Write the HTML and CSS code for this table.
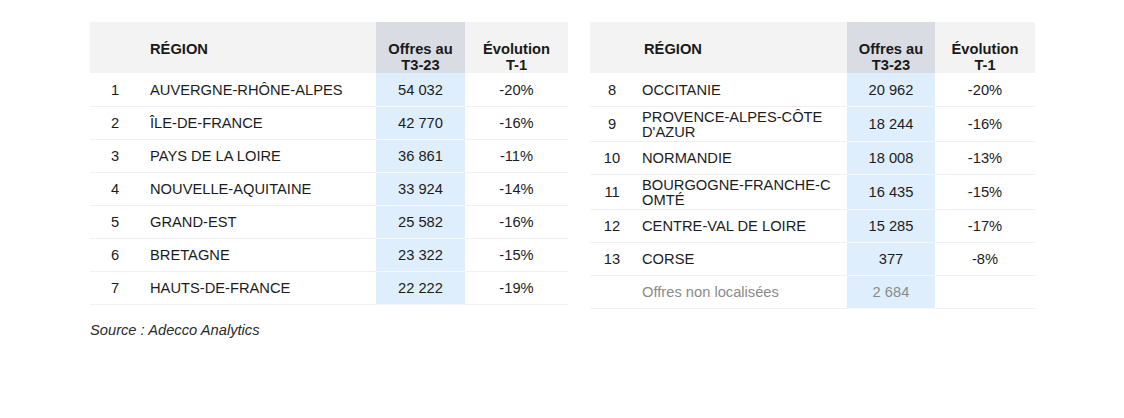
FILE: index.html
```html
<!DOCTYPE html>
<html lang="fr">
<head>
<meta charset="utf-8">
<title>Offres par région</title>
<link rel="stylesheet" href="styles.css">
</head>
<body>
<div class="page">
  <div class="block block-left">
    <table class="grid grid-left">
      <colgroup><col class="c-num"><col class="c-reg"><col class="c-off"><col class="c-evo"></colgroup>
      <thead>
        <tr><th></th><th class="th-reg">RÉGION</th><th class="th-off">Offres au<br>T3-23</th><th>Évolution<br>T-1</th></tr>
      </thead>
      <tbody>
        <tr><td class="num">1</td><td class="reg">AUVERGNE-RHÔNE-ALPES</td><td class="off">54 032</td><td class="evo">-20%</td></tr>
        <tr><td class="num">2</td><td class="reg">ÎLE-DE-FRANCE</td><td class="off">42 770</td><td class="evo">-16%</td></tr>
        <tr><td class="num">3</td><td class="reg">PAYS DE LA LOIRE</td><td class="off">36 861</td><td class="evo">-11%</td></tr>
        <tr><td class="num">4</td><td class="reg">NOUVELLE-AQUITAINE</td><td class="off">33 924</td><td class="evo">-14%</td></tr>
        <tr><td class="num">5</td><td class="reg">GRAND-EST</td><td class="off">25 582</td><td class="evo">-16%</td></tr>
        <tr><td class="num">6</td><td class="reg">BRETAGNE</td><td class="off">23 322</td><td class="evo">-15%</td></tr>
        <tr><td class="num">7</td><td class="reg">HAUTS-DE-FRANCE</td><td class="off">22 222</td><td class="evo">-19%</td></tr>
      </tbody>
    </table>
    <p class="source">Source : Adecco Analytics</p>
  </div>
  <div class="block block-right">
    <table class="grid grid-right">
      <colgroup><col class="c-num"><col class="c-reg"><col class="c-off"><col class="c-evo"></colgroup>
      <thead>
        <tr><th></th><th class="th-reg">RÉGION</th><th class="th-off">Offres au<br>T3-23</th><th>Évolution<br>T-1</th></tr>
      </thead>
      <tbody>
        <tr><td class="num">8</td><td class="reg">OCCITANIE</td><td class="off">20 962</td><td class="evo">-20%</td></tr>
        <tr><td class="num">9</td><td class="reg">PROVENCE-ALPES-CÔTE<br>D'AZUR</td><td class="off">18 244</td><td class="evo">-16%</td></tr>
        <tr><td class="num">10</td><td class="reg">NORMANDIE</td><td class="off">18 008</td><td class="evo">-13%</td></tr>
        <tr><td class="num">11</td><td class="reg">BOURGOGNE-FRANCHE-C<br>OMTÉ</td><td class="off">16 435</td><td class="evo">-15%</td></tr>
        <tr><td class="num">12</td><td class="reg">CENTRE-VAL DE LOIRE</td><td class="off">15 285</td><td class="evo">-17%</td></tr>
        <tr><td class="num">13</td><td class="reg">CORSE</td><td class="off">377</td><td class="evo">-8%</td></tr>
        <tr class="muted"><td class="num"></td><td class="reg">Offres non localisées</td><td class="off">2 684</td><td class="evo"></td></tr>
      </tbody>
    </table>
  </div>
</div>
</body>
</html>
```
FILE: styles.css
```css
* { box-sizing: border-box; }
html, body { margin: 0; padding: 0; background: #ffffff; }
body {
  font-family: "Liberation Sans", Arial, Helvetica, sans-serif;
  color: #1c1c1c;
  font-size: 14.7px;
}
.page {
  display: flex;
  align-items: flex-start;
  gap: 22px;
  padding: 22px 0 0 90px;
}
.grid {
  border-collapse: collapse;
  table-layout: fixed;
}
.grid-left { width: 478px; }
.grid-right { width: 445px; }
.grid-left .c-num { width: 50px; }
.grid-left .c-reg { width: 236px; }
.grid-left .c-off { width: 89px; }
.grid-left .c-evo { width: 103px; }
.grid-right .c-num { width: 44px; }
.grid-right .c-reg { width: 213px; }
.grid-right .c-off { width: 88px; }
.grid-right .c-evo { width: 100px; }

.grid th {
  background: #f3f3f3;
  font-weight: bold;
  font-size: 14.7px;
  line-height: 16px;
  text-align: center;
  vertical-align: baseline;
  padding: 19px 4px 0;
  color: #1a1a1a;
}
.grid th.th-reg { text-align: left; padding-left: 10px; }
.grid th.th-off { background: #d9dde3; }

.grid td {
  height: 33px;
  padding: 3px 4px 1px;
  line-height: 15px;
  vertical-align: middle;
  text-align: center;
  border-bottom: 1px solid #f0f0f0;
}
.grid td.reg { text-align: left; padding-left: 10px; }
.grid-right td.reg { padding-left: 8px; }
.grid td.off { background: #dfeefc; border-bottom-color: #f3f8fd; }
.grid .muted td { color: #8b8b8b; }

.source {
  margin: 18px 0 0;
  font-style: italic;
  font-size: 14.7px;
  line-height: 15px;
  color: #2a2a2a;
}
```
